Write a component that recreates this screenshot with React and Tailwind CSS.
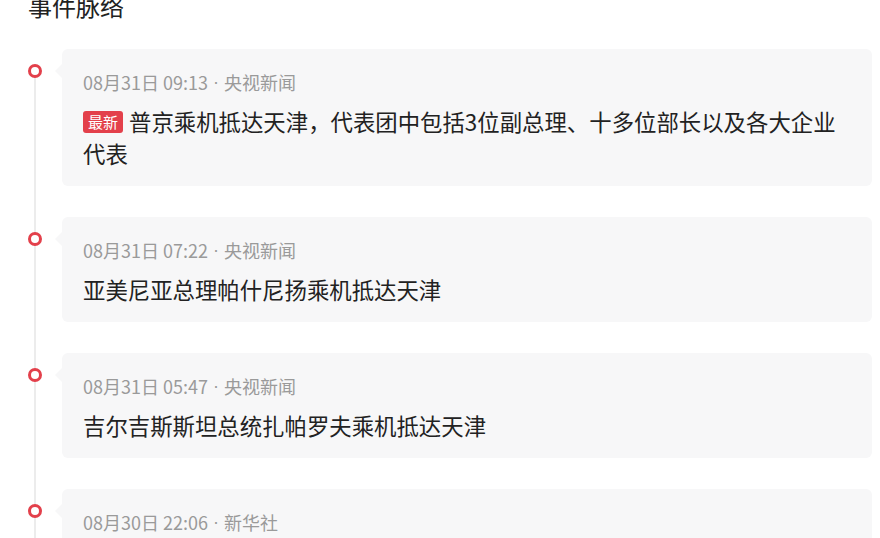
import React from 'react';

const events = [
  {
    time: '08月31日 09:13',
    source: '央视新闻',
    title: '普京乘机抵达天津，代表团中包括3位副总理、十多位部长以及各大企业代表',
    latest: true
  },
  { time: '08月31日 07:22', source: '央视新闻', title: '亚美尼亚总理帕什尼扬乘机抵达天津' },
  { time: '08月31日 05:47', source: '央视新闻', title: '吉尔吉斯斯坦总统扎帕罗夫乘机抵达天津' },
  { time: '08月30日 22:06', source: '新华社', title: '土耳其总统埃尔多安乘机抵达天津' }
];

function TimelineItem({ item, first }) {
  return (
    <div className="flex">
      <div className="relative w-[14px] shrink-0">
        <div
          className={`absolute left-[6px] w-[1.5px] bg-[#ececec] bottom-0 ${first ? 'top-[22px]' : 'top-0'}`}
        />
        <div className="relative mt-[15px] w-[14px] h-[14px] rounded-full border-[3px] border-[#e3404b] bg-white" />
      </div>
      <div className="flex-1 pl-[20px] pb-[31px]">
        <div className="relative bg-[#f7f7f8] rounded-[6px] pl-[21px] pr-[28px] pt-[20px] pb-[17px]">
          <div className="absolute left-[-7px] top-[15px] w-0 h-0 border-y-[7px] border-y-transparent border-r-[7px] border-r-[#f7f7f8]" />
          <div className="h-[26px] flex items-center whitespace-pre text-[18px] leading-[26px] text-[#9a9a9a]">
            {item.time}
            <span style={{ fontFamily: '"Liberation Sans", sans-serif' }}> · </span>
            {item.source}
          </div>
          <div className="mt-[10px] text-[22.4px] leading-[32px] text-[#222]">
            {item.latest && (
              <span className="inline-block align-[3px] mr-[6px] px-[5px] rounded-[3px] bg-[#e3404b] text-white text-[15px] leading-[22px]">
                最新
              </span>
            )}
            {item.title}
          </div>
        </div>
      </div>
    </div>
  );
}

export default function App() {
  return (
    <div
      className="w-[880px] h-[538px] overflow-hidden bg-white pl-[28px] pr-[8px]"
      style={{ fontFamily: '"Noto Sans CJK SC", "Noto Sans", sans-serif' }}
    >
      <h2 className="mt-[-10px] text-[24px] leading-[32px] font-normal text-[#222]">事件脉络</h2>
      <div className="mt-[27px]">
        {events.map((item, i) => (
          <TimelineItem key={i} item={item} first={i === 0} />
        ))}
      </div>
    </div>
  );
}
